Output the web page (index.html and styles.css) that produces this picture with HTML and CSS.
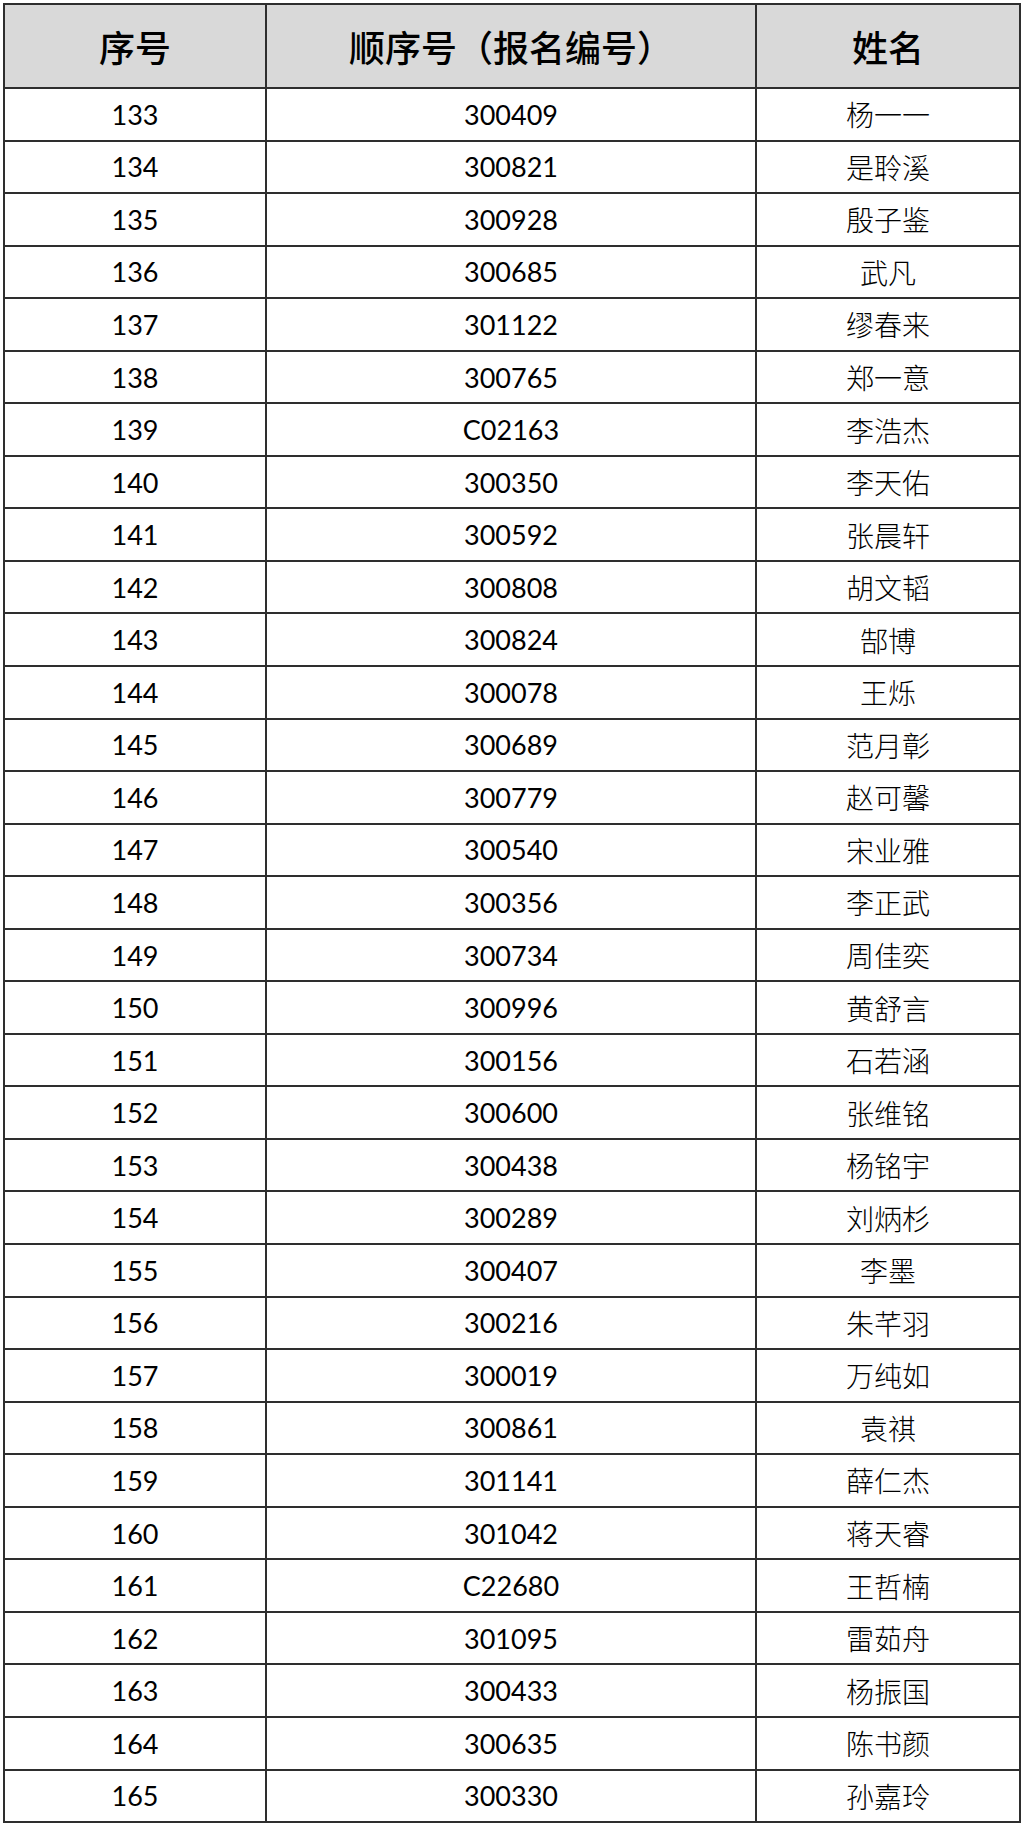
FILE: index.html
```html
<!DOCTYPE html>
<html lang="zh-CN">
<head>
<meta charset="utf-8">
<link rel="stylesheet" href="styles.css">
</head>
<body>
<div class="wrap">
<table class="list">
<colgroup><col class="c1"><col class="c2"><col class="c3"></colgroup>
<thead>
<tr><th>序号</th><th>顺序号（报名编号）</th><th>姓名</th></tr>
</thead>
<tbody>
<tr><td class="num">133</td><td class="num">300409</td><td class="name">杨一一</td></tr>
<tr><td class="num">134</td><td class="num">300821</td><td class="name">是聆溪</td></tr>
<tr><td class="num">135</td><td class="num">300928</td><td class="name">殷子鉴</td></tr>
<tr><td class="num">136</td><td class="num">300685</td><td class="name">武凡</td></tr>
<tr><td class="num">137</td><td class="num">301122</td><td class="name">缪春来</td></tr>
<tr><td class="num">138</td><td class="num">300765</td><td class="name">郑一意</td></tr>
<tr><td class="num">139</td><td class="num">C02163</td><td class="name">李浩杰</td></tr>
<tr><td class="num">140</td><td class="num">300350</td><td class="name">李天佑</td></tr>
<tr><td class="num">141</td><td class="num">300592</td><td class="name">张晨轩</td></tr>
<tr><td class="num">142</td><td class="num">300808</td><td class="name">胡文韬</td></tr>
<tr><td class="num">143</td><td class="num">300824</td><td class="name">郜博</td></tr>
<tr><td class="num">144</td><td class="num">300078</td><td class="name">王烁</td></tr>
<tr><td class="num">145</td><td class="num">300689</td><td class="name">范月彰</td></tr>
<tr><td class="num">146</td><td class="num">300779</td><td class="name">赵可馨</td></tr>
<tr><td class="num">147</td><td class="num">300540</td><td class="name">宋业雅</td></tr>
<tr><td class="num">148</td><td class="num">300356</td><td class="name">李正武</td></tr>
<tr><td class="num">149</td><td class="num">300734</td><td class="name">周佳奕</td></tr>
<tr><td class="num">150</td><td class="num">300996</td><td class="name">黄舒言</td></tr>
<tr><td class="num">151</td><td class="num">300156</td><td class="name">石若涵</td></tr>
<tr><td class="num">152</td><td class="num">300600</td><td class="name">张维铭</td></tr>
<tr><td class="num">153</td><td class="num">300438</td><td class="name">杨铭宇</td></tr>
<tr><td class="num">154</td><td class="num">300289</td><td class="name">刘炳杉</td></tr>
<tr><td class="num">155</td><td class="num">300407</td><td class="name">李墨</td></tr>
<tr><td class="num">156</td><td class="num">300216</td><td class="name">朱芊羽</td></tr>
<tr><td class="num">157</td><td class="num">300019</td><td class="name">万纯如</td></tr>
<tr><td class="num">158</td><td class="num">300861</td><td class="name">袁祺</td></tr>
<tr><td class="num">159</td><td class="num">301141</td><td class="name">薛仁杰</td></tr>
<tr><td class="num">160</td><td class="num">301042</td><td class="name">蒋天睿</td></tr>
<tr><td class="num">161</td><td class="num">C22680</td><td class="name">王哲楠</td></tr>
<tr><td class="num">162</td><td class="num">301095</td><td class="name">雷茹舟</td></tr>
<tr><td class="num">163</td><td class="num">300433</td><td class="name">杨振国</td></tr>
<tr><td class="num">164</td><td class="num">300635</td><td class="name">陈书颜</td></tr>
<tr><td class="num">165</td><td class="num">300330</td><td class="name">孙嘉玲</td></tr>
</tbody>
</table>
</div>
</body>
</html>
```

FILE: styles.css
```css
html, body {
  margin: 0;
  padding: 0;
  background: #ffffff;
}
.wrap {
  padding: 3px 0 0 3px;
}
.list {
  border-collapse: separate;
  border-spacing: 0;
  table-layout: fixed;
  width: 1018px;
  border-left: 2px solid #2e2e2e;
  border-top: 2px solid #2e2e2e;
}
.c1 { width: 262px; }
.c2 { width: 490px; }
.c3 { width: 264px; }
.list th, .list td {
  border-right: 2px solid #2e2e2e;
  border-bottom: 2px solid #2e2e2e;
  padding: 0;
  text-align: center;
  vertical-align: middle;
  color: #000;
  box-sizing: border-box;
}
.list th {
  background: #d9d9d9;
  height: 84px;
  font-family: "Noto Sans CJK SC", sans-serif;
  font-weight: 500;
  font-size: 36px;
  line-height: 1;
}
.list td {
  height: 52.55px;
  line-height: 1;
}
.num {
  font-family: Lato, "Open Sans", sans-serif;
  font-size: 27px;
}
.name {
  font-family: "Noto Sans CJK SC", sans-serif;
  font-weight: 300;
  font-size: 28px;
}
```
